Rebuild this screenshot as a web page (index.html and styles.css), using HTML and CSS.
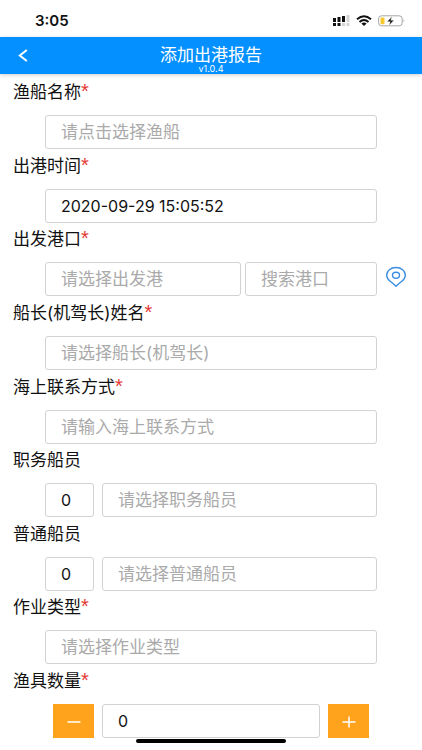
FILE: index.html
```html
<!DOCTYPE html>
<html lang="zh-CN">
<head>
<meta charset="utf-8">
<meta name="viewport" content="width=device-width, initial-scale=1">
<title>添加出港报告</title>
<link rel="stylesheet" href="styles.css">
</head>
<body>
<div class="status">
  <span class="time">3:05</span>
  <div class="status-icons">
    <svg width="18" height="12" viewBox="0 0 18 12">
      <path d="M1 3h3v4H1zM5.500 2h3v5h-3zM10 1h3v6h-3zM1 8h3v3H1zM5.500 8h3v3h-3z" fill="#111"/>
      <path d="M14.500 0h3v7h-3zM10 8h3v3h-3zM14.500 8h3v3h-3z" fill="#d4d4d4"/>
    </svg>
    <svg width="16" height="12" viewBox="0 0 16 12">
      <path d="M1 4.300Q8-1.700 15 4.300M3.500 6.900Q8 3.100 12.500 6.900" fill="none" stroke="#111" stroke-width="2"/>
      <path d="M5.400 8.600Q8 6.600 10.600 8.600L8 11z" fill="#111"/>
    </svg>
    <svg width="28" height="12" viewBox="0 0 28 12">
      <rect x=".6" y=".8" width="23.600" height="10" rx="3" fill="#fff" stroke="#a5a5a5"/>
      <rect x="2.500" y="2.500" width="4" height="6.700" rx="1" fill="#f7c92f"/>
      <path d="M14 1.500L9 6.700h3.200L11 10.500l5-5.300h-3.200z" fill="#111" stroke="#fff" stroke-width=".4"/>
      <path d="M25.600 4q1.600 1.800 0 3.600z" fill="#999"/>
    </svg>
  </div>
</div>
<header class="bar">
  <button class="back" type="button" aria-label="返回">
    <svg width="10" height="14" viewBox="0 0 10 14"><path d="M8.800 1L1.800 6.500l7 5.500" fill="none" stroke="#fff" stroke-width="2"/></svg>
  </button>
  <div class="heading">
    <h1>添加出港报告</h1>
    <span class="version">v1.0.4</span>
  </div>
</header>
<form class="form">
  <div class="group">
    <label for="ship">渔船名称<b>*</b></label>
    <div class="row"><input id="ship" class="field" placeholder="请点击选择渔船"></div>
  </div>
  <div class="group">
    <label for="time">出港时间<b>*</b></label>
    <div class="row"><input id="time" class="field" value="2020-09-29 15:05:52"></div>
  </div>
  <div class="group">
    <label for="port">出发港口<b>*</b></label>
    <div class="row port">
      <input id="port" class="field" placeholder="请选择出发港">
      <input class="field" aria-label="搜索港口" placeholder="搜索港口">
      <button class="pin" type="button" aria-label="定位">
        <svg width="22" height="22" viewBox="0 0 22 22" fill="none" stroke="#3a8de0" stroke-width="1.400">
          <path d="M11 20.300Q8.800 18 5.500 15.500Q1.700 12.600 1.700 9C1.700 4.800 5.700 1.500 11 1.500S20.300 4.800 20.300 9Q20.300 12.600 16.500 15.500Q13.200 18 11 20.300Z"/>
          <ellipse cx="11" cy="9.300" rx="3.500" ry="3"/>
        </svg>
      </button>
    </div>
  </div>
  <div class="group">
    <label for="captain">船长(机驾长)姓名<b>*</b></label>
    <div class="row"><input id="captain" class="field" placeholder="请选择船长(机驾长)"></div>
  </div>
  <div class="group">
    <label for="contact">海上联系方式<b>*</b></label>
    <div class="row"><input id="contact" class="field" placeholder="请输入海上联系方式"></div>
  </div>
  <div class="group">
    <label for="officer">职务船员</label>
    <div class="row crew">
      <input class="field" aria-label="职务船员人数" value="0">
      <input id="officer" class="field" placeholder="请选择职务船员">
    </div>
  </div>
  <div class="group">
    <label for="sailor">普通船员</label>
    <div class="row crew">
      <input class="field" aria-label="普通船员人数" value="0">
      <input id="sailor" class="field" placeholder="请选择普通船员">
    </div>
  </div>
  <div class="group">
    <label for="work">作业类型<b>*</b></label>
    <div class="row"><input id="work" class="field" placeholder="请选择作业类型"></div>
  </div>
  <div class="group">
    <label for="gear">渔具数量<b>*</b></label>
    <div class="row counter">
      <button class="step" type="button" aria-label="减少">
        <svg width="14" height="14" viewBox="0 0 14 14"><path d="M.5 8h13" stroke="#fff" stroke-width="1.500"/></svg>
      </button>
      <input id="gear" class="field" value="0">
      <button class="step" type="button" aria-label="增加">
        <svg width="14" height="14" viewBox="0 0 14 14"><path d="M.5 8h13M7 2.500v11" stroke="#fff" stroke-width="1.500"/></svg>
      </button>
    </div>
  </div>
</form>
<div class="home"></div>
</body>
</html>
```
FILE: styles.css
```css
* { box-sizing: border-box; }

body {
  margin: 0;
  min-height: 100vh;
  display: flex;
  flex-direction: column;
  background: #fff;
  color: #111;
  font-family: Inter, "Noto Sans CJK SC", sans-serif;
  font-size: 17px;
}

button {
  display: flex;
  align-items: center;
  justify-content: center;
  padding: 0;
  border: 0;
  background: none;
}

svg { display: block; }

.status {
  display: flex;
  align-items: center;
  justify-content: space-between;
  height: 37px;
  padding: 4px 16px 0 35px;
}

.time {
  font-size: 15px;
  font-weight: 600;
}

.status-icons {
  display: flex;
  gap: 6px;
}

.bar {
  display: grid;
  grid-template-columns: 46px 1fr 46px;
  height: 37px;
  background: #0490ff;
  color: #fff;
  box-shadow: 0 1px 4px rgba(0, 0, 0, 0.2);
}

.heading {
  display: flex;
  flex-direction: column;
  align-items: center;
  padding-top: 9px;
}

h1 {
  margin: 0;
  font-size: 17px;
  font-weight: 400;
  line-height: 18px;
}

.version {
  font-size: 9px;
  line-height: 9px;
}

.form {
  flex: 1;
  display: flex;
  flex-direction: column;
  justify-content: space-between;
  padding: 2px 0 12px;
}

label {
  display: block;
  height: 39px;
  padding-left: 13px;
  line-height: 32px;
}

label b {
  color: #e53935;
  font-family: "Liberation Sans", sans-serif;
  font-size: 20px;
  font-weight: 400;
  line-height: 20px;
}

.row {
  display: grid;
  height: 34px;
  margin: 0 45px;
}

.field {
  width: 100%;
  min-width: 0;
  height: 34px;
  padding: 0 15px;
  border: 1px solid #d2d2d2;
  border-radius: 3px;
  background: #fff;
  color: #111;
  font-family: inherit;
  font-size: 16px;
}

.field::placeholder {
  color: #aaa;
  font-size: 17px;
  opacity: 1;
}

.port {
  grid-template-columns: 196fr 132fr 30px;
  column-gap: 4px;
  margin-right: 11px;
}

.pin { padding: 0 2px 4px; }

.crew {
  grid-template-columns: 49px 1fr;
  column-gap: 8px;
}

.counter {
  grid-template-columns: 41px 1fr 41px;
  column-gap: 8px;
  margin: 0 53px;
}

.step { background: #ffa31d; }

.home {
  position: fixed;
  bottom: 7px;
  left: 50%;
  width: 150px;
  height: 4px;
  margin-left: -75px;
  border-radius: 2px;
  background: #000;
}
```
